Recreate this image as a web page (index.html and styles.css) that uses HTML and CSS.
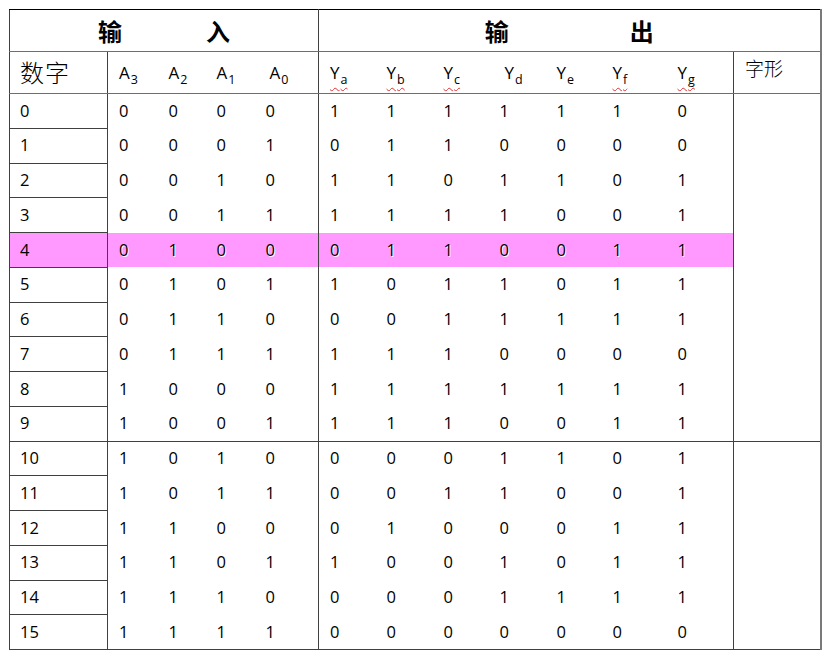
FILE: index.html
```html
<!DOCTYPE html>
<html lang="zh">
<head>
<meta charset="utf-8">
<title>真值表</title>
<link rel="stylesheet" href="styles.css">
</head>
<body>
<table class="truth">
  <colgroup>
    <col class="c-num">
    <col class="c-a3"><col class="c-a2"><col class="c-a1"><col class="c-a0">
    <col class="c-ya"><col class="c-yb"><col class="c-yc"><col class="c-yd"><col class="c-ye"><col class="c-yf"><col class="c-yg">
    <col class="c-shape">
  </colgroup>
  <thead>
    <tr class="h1">
      <th colspan="5" class="grp sep"><span class="grp-text in"><span>输</span><span>入</span></span></th>
      <th colspan="8" class="grp"><span class="grp-text out"><span>输</span><span>出</span></span></th>
    </tr>
    <tr class="h2">
      <th class="num-h sep">数字</th>
      <th>A<span class="sub">3</span></th>
      <th>A<span class="sub">2</span></th>
      <th>A<span class="sub">1</span></th>
      <th class="sep a0h">A<span class="sub">0</span></th>
      <th><span class="sq">Y<span class="sub">a</span></span></th>
      <th><span class="sq">Y<span class="sub">b</span></span></th>
      <th><span class="sq">Y<span class="sub">c</span></span></th>
      <th class="ydh">Y<span class="sub">d</span></th>
      <th>Y<span class="sub">e</span></th>
      <th><span class="sq">Y<span class="sub">f</span></span></th>
      <th class="sep"><span class="sq">Y<span class="sub">g</span></span></th>
      <th class="shape-h">字形</th>
    </tr>
  </thead>
  <tbody>
    <tr><td class="num">0</td><td>0</td><td>0</td><td>0</td><td class="sep">0</td><td>1</td><td>1</td><td>1</td><td>1</td><td>1</td><td>1</td><td class="sep">0</td><td class="shape" rowspan="10"></td></tr>
    <tr><td class="num">1</td><td>0</td><td>0</td><td>0</td><td class="sep">1</td><td>0</td><td>1</td><td>1</td><td>0</td><td>0</td><td>0</td><td class="sep">0</td></tr>
    <tr><td class="num">2</td><td>0</td><td>0</td><td>1</td><td class="sep">0</td><td>1</td><td>1</td><td>0</td><td>1</td><td>1</td><td>0</td><td class="sep">1</td></tr>
    <tr><td class="num">3</td><td>0</td><td>0</td><td>1</td><td class="sep">1</td><td>1</td><td>1</td><td>1</td><td>1</td><td>0</td><td>0</td><td class="sep">1</td></tr>
    <tr class="hl"><td class="num">4</td><td>0</td><td>1</td><td>0</td><td class="sep">0</td><td>0</td><td>1</td><td>1</td><td>0</td><td>0</td><td>1</td><td class="sep">1</td></tr>
    <tr><td class="num">5</td><td>0</td><td>1</td><td>0</td><td class="sep">1</td><td>1</td><td>0</td><td>1</td><td>1</td><td>0</td><td>1</td><td class="sep">1</td></tr>
    <tr><td class="num">6</td><td>0</td><td>1</td><td>1</td><td class="sep">0</td><td>0</td><td>0</td><td>1</td><td>1</td><td>1</td><td>1</td><td class="sep">1</td></tr>
    <tr><td class="num">7</td><td>0</td><td>1</td><td>1</td><td class="sep">1</td><td>1</td><td>1</td><td>1</td><td>0</td><td>0</td><td>0</td><td class="sep">0</td></tr>
    <tr><td class="num">8</td><td>1</td><td>0</td><td>0</td><td class="sep">0</td><td>1</td><td>1</td><td>1</td><td>1</td><td>1</td><td>1</td><td class="sep">1</td></tr>
    <tr class="grp-end"><td class="num">9</td><td>1</td><td>0</td><td>0</td><td class="sep">1</td><td>1</td><td>1</td><td>1</td><td>0</td><td>0</td><td>1</td><td class="sep">1</td></tr>
    <tr><td class="num">10</td><td>1</td><td>0</td><td>1</td><td class="sep">0</td><td>0</td><td>0</td><td>0</td><td>1</td><td>1</td><td>0</td><td class="sep">1</td><td class="shape" rowspan="6"></td></tr>
    <tr><td class="num">11</td><td>1</td><td>0</td><td>1</td><td class="sep">1</td><td>0</td><td>0</td><td>1</td><td>1</td><td>0</td><td>0</td><td class="sep">1</td></tr>
    <tr><td class="num">12</td><td>1</td><td>1</td><td>0</td><td class="sep">0</td><td>0</td><td>1</td><td>0</td><td>0</td><td>0</td><td>1</td><td class="sep">1</td></tr>
    <tr><td class="num">13</td><td>1</td><td>1</td><td>0</td><td class="sep">1</td><td>1</td><td>0</td><td>0</td><td>1</td><td>0</td><td>1</td><td class="sep">1</td></tr>
    <tr><td class="num">14</td><td>1</td><td>1</td><td>1</td><td class="sep">0</td><td>0</td><td>0</td><td>0</td><td>1</td><td>1</td><td>1</td><td class="sep">1</td></tr>
    <tr><td class="num">15</td><td>1</td><td>1</td><td>1</td><td class="sep">1</td><td>0</td><td>0</td><td>0</td><td>0</td><td>0</td><td>0</td><td class="sep">0</td></tr>
  </tbody>
</table>
</body>
</html>
```

FILE: styles.css
```css
html, body {
  margin: 0;
  padding: 0;
  background: #ffffff;
}

body {
  padding: 9px 0 0 9px;
  font-family: "Open Sans", "Liberation Sans", "Noto Sans CJK SC", sans-serif;
  color: #000;
}

.truth {
  border-collapse: collapse;
  table-layout: fixed;
  width: 812px;
  border: 1px solid #404040;
  border-top-color: #000;
  border-right: 2px solid #7a7a7a;
}

.c-num { width: 98px; }
.c-a3 { width: 50px; }
.c-a2 { width: 48px; }
.c-a1 { width: 49px; }
.c-a0 { width: 64px; }
.c-ya { width: 57px; }
.c-yb { width: 57px; }
.c-yc { width: 56px; }
.c-yd { width: 57px; }
.c-ye { width: 56px; }
.c-yf { width: 65px; }
.c-yg { width: 67px; }
.c-shape { width: 87px; }

.truth th,
.truth td {
  padding: 0 0 0 11px;
  text-align: left;
  font-weight: normal;
  white-space: nowrap;
  overflow: visible;
}

.truth .h1 th {
  height: 41px;
  border-bottom: 1px solid #6e6e6e;
}

.truth .h1 .grp {
  text-align: center;
  padding: 0;
  font-family: "Noto Sans CJK SC", sans-serif;
  font-weight: 700;
  font-size: 24px;
  line-height: 1;
}

.grp-text {
  display: inline-flex;
  justify-content: center;
}

.grp-text.in { gap: 84px; padding-top: 1px; }
.grp-text.out { gap: 121px; padding-top: 1px; }

.truth .h2 th {
  height: 41px;
  border-bottom: 1px solid #6e6e6e;
  font-size: 17px;
  line-height: 20px;
  vertical-align: middle;
}

.truth .sep {
  border-right: 1px solid #404040;
}

.truth .h2 .num-h {
  font-family: "Noto Sans CJK SC", sans-serif;
  font-size: 24px;
  line-height: 24px;
  font-weight: 300;
  padding-left: 10px;
  padding-bottom: 2px;
  height: 39px;
  letter-spacing: 1px;
}

.truth .h2 .shape-h {
  font-family: "Noto Sans CJK SC", sans-serif;
  font-size: 19px;
  line-height: 20px;
  font-weight: 300;
  vertical-align: top;
  padding-top: 6px;
  padding-left: 11px;
  height: 35px;
}

.truth .h2 .a0h { padding-left: 15px; }
.truth .h2 .ydh { padding-left: 16px; }

.sub {
  font-size: 12.5px;
  position: relative;
  top: 5px;
  margin-left: 1px;
  line-height: 1;
}

.sq {
  text-decoration: underline wavy #e03030;
  text-decoration-thickness: 1px;
  text-underline-offset: 8px;
  text-decoration-skip-ink: none;
}

.truth tbody td {
  height: 33.75px;
  font-size: 16.5px;
  line-height: 1;
  vertical-align: middle;
}

.truth td.num {
  border-bottom: 1px solid #404040;
  border-right: 1px solid #404040;
  padding-left: 10px;
}

.truth .grp-end td {
  border-bottom: 1px solid #404040;
}

.truth td.shape {
  border-bottom: 1px solid #404040;
  border-left: 1px solid #404040;
}

.truth .hl td {
  background: #ff99ff;
  text-shadow: 1px 1px 0 #ffffff;
}

.truth .hl td.num {
  text-shadow: none;
}
```
